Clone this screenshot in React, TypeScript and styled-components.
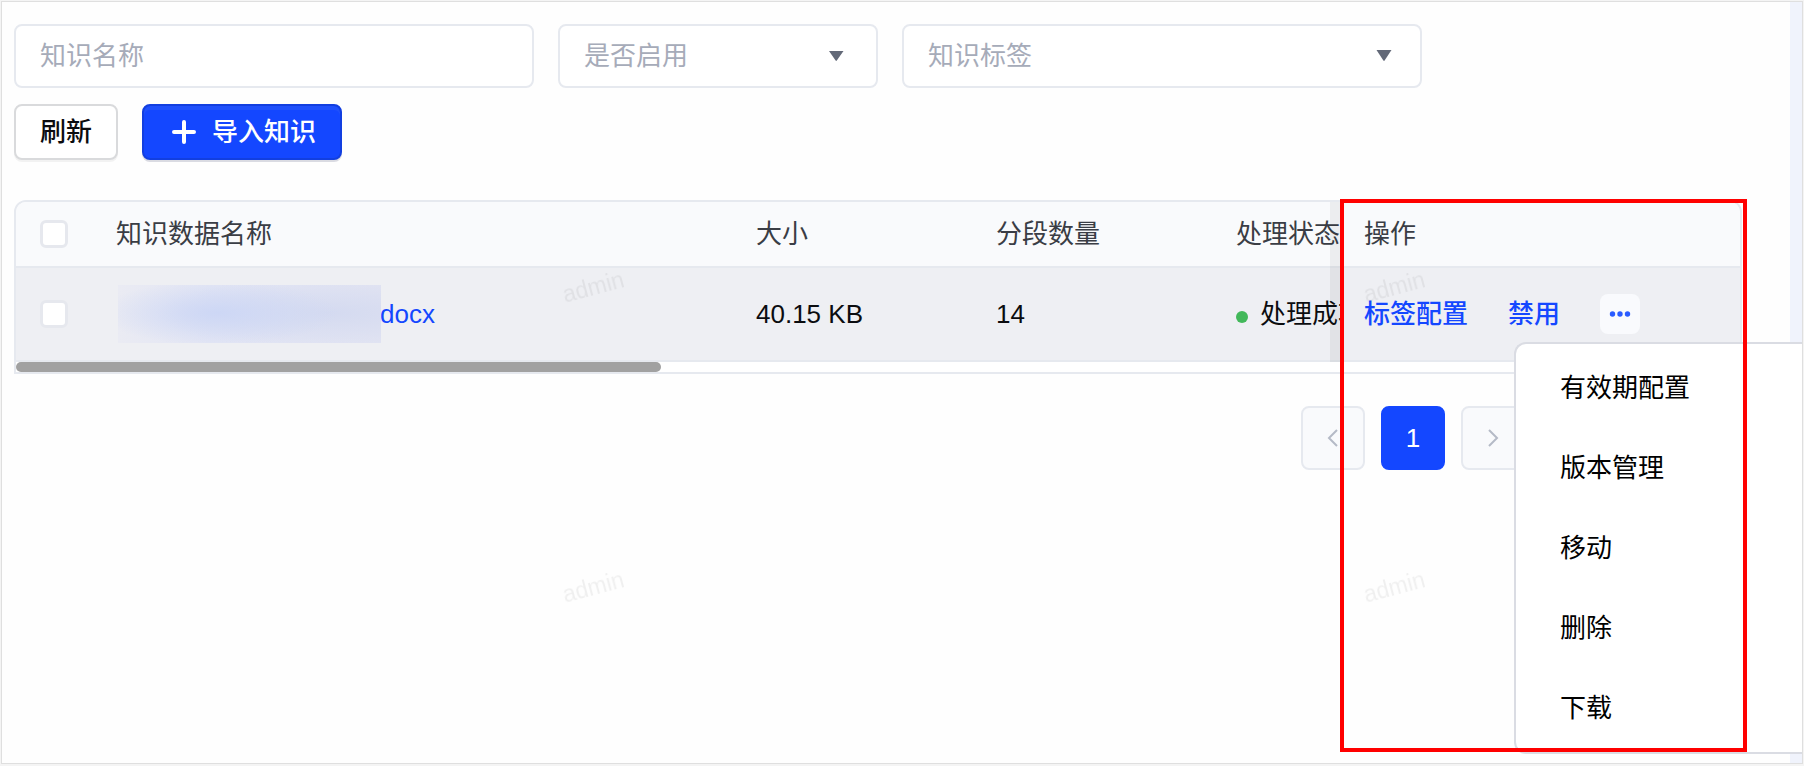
import React from "react";
import styled, { createGlobalStyle, css } from "styled-components";

const sans = `"Liberation Sans", "Noto Sans CJK SC", sans-serif`;
const blue = "#1447ff";
const line = "#e6e9ef";

const GlobalStyle = createGlobalStyle`
  *, *::before, *::after { box-sizing: border-box; }
  body { margin: 0; background: #fff; font-family: ${sans}; font-size: 26px; line-height: 36px; color: #0b0c0f; }
  button, input, select { font: inherit; color: inherit; margin: 0; }
`;

const Page = styled.div`
  display: flex;
  min-height: 100vh;
  padding: 1px 1px 2px;
  background: #f4f4f4;
`;

const Frame = styled.div`
  position: relative;
  display: flex;
  flex: 1;
  min-width: 0;
  overflow: hidden;
  border: 1px solid #dfdfdf;
  background: #fefefe;
`;

const Panel = styled.main`
  flex: 1;
  min-width: 0;
  padding: 22px 48px 0 12px;
`;

const Rail = styled.div`
  flex: none;
  width: 12px;
  background: #f0f3fc;
`;

const Filters = styled.form`
  display: flex;
  gap: 24px;
`;

const field = css`
  width: 100%;
  height: 64px;
  padding: 0 24px;
  border: 2px solid ${line};
  border-radius: 8px;
  background: #fff;
  color: #a6abb9;
  outline: none;
`;

const Field = styled.label<{ $width: number }>`
  position: relative;
  flex: 0 1 ${(p) => p.$width}px;
  min-width: 0;
`;

const TextInput = styled.input`
  ${field}
  &::placeholder { color: #a6abb9; opacity: 1; }
`;

const Select = styled.select`
  ${field}
  appearance: none;
`;

const Caret = styled.svg<{ $right: number }>`
  position: absolute;
  top: 26px;
  right: ${(p) => p.$right}px;
  width: 16px;
  height: 12px;
  fill: #636978;
  pointer-events: none;
`;

const Toolbar = styled.div`
  display: flex;
  gap: 24px;
  margin: 16px 0 40px;
`;

const Button = styled.button<{ $primary?: boolean }>`
  display: flex;
  align-items: center;
  gap: 16px;
  height: 56px;
  padding: 0 24px;
  border: 2px solid #d9dadc;
  border-radius: 8px;
  background: #fff;
  font-weight: 500;
  box-shadow: 0 2px 0 #f2f2f2;
  ${(p) =>
    p.$primary &&
    css`
      padding: 0 24px 0 28px;
      border-color: #123fe0;
      background: ${blue};
      color: #fff;
      box-shadow: 0 2px 0 #dadbe2, inset 0 4px 0 #1f50fb;
    `}
`;

const PlusIcon = styled.svg`
  width: 24px;
  height: 24px;
  stroke: #fff;
  stroke-width: 4;
  stroke-linecap: round;
`;

const TableArea = styled.section`
  position: relative;
`;

const TableFrame = styled.div`
  overflow: hidden;
  border: 2px solid ${line};
  border-radius: 12px 12px 0 0;
`;

const Table = styled.table`
  width: 1836px;
  min-width: 100%;
  table-layout: fixed;
  border-collapse: separate;
  border-spacing: 0;
  text-align: left;
`;

const Cell = styled.td<{ $pinned?: boolean }>`
  height: 94px;
  padding: 0 24px;
  border-bottom: 2px solid ${line};
  background: #eeeff3;
  white-space: nowrap;
  ${(p) =>
    p.$pinned &&
    css`
      position: sticky;
      right: 0;
      &::before {
        content: "";
        position: absolute;
        top: 0;
        bottom: -2px;
        left: -10px;
        width: 10px;
        background: rgba(0, 0, 0, 0.05);
      }
    `}
`;

const HeadCell = styled(Cell).attrs({ as: "th" })`
  height: 66px;
  background: #f9fafc;
  color: #3a3d45;
  font-weight: 400;
`;

const Checkbox = styled.input`
  display: block;
  appearance: none;
  width: 28px;
  height: 28px;
  border: 3px solid #e6e8ee;
  border-radius: 6px;
  background: #fff;
`;

const FileLink = styled.a`
  display: flex;
  align-items: center;
  color: ${blue};
  text-decoration: none;
`;

const Redacted = styled.span`
  position: relative;
  width: 263px;
  height: 58px;
  margin-left: 2px;
  margin-right: -1px;
  background:
    radial-gradient(ellipse 120px 32px at 100px 28px, #cdd7f5, transparent),
    radial-gradient(ellipse 170px 36px at 210px 28px, #d4daf0, transparent),
    linear-gradient(90deg, #eaebf3, #e2e5f4 35%, #e2e4f2);
`;

const Status = styled.span`
  display: flex;
  align-items: center;
  gap: 12px;
  &::before {
    content: "";
    width: 12px;
    height: 12px;
    margin-top: 6px;
    border-radius: 50%;
    background: #42b85a;
  }
`;

const Actions = styled.div`
  display: flex;
  align-items: center;
  gap: 40px;
`;

const ActionButton = styled.button`
  padding: 0;
  border: 0;
  background: none;
  color: ${blue};
  font-weight: 500;
`;

const MoreButton = styled(ActionButton)`
  width: 40px;
  height: 40px;
  border-radius: 8px;
  background: #f9fafd;
`;

const MoreIcon = styled.svg`
  display: block;
  width: 40px;
  height: 40px;
  fill: #2a5bff;
`;

const Track = styled.div`
  height: 10px;
  background: #fff;
`;

const Thumb = styled.div`
  width: 37.4%;
  height: 10px;
  border-radius: 5px;
  background: #a1a1a1;
`;

const Pagination = styled.nav`
  display: flex;
  justify-content: flex-end;
  gap: 16px;
  margin-top: 32px;
  padding-right: 217px;
`;

const PageButton = styled.button<{ $current?: boolean }>`
  display: flex;
  align-items: center;
  justify-content: center;
  width: 64px;
  height: 64px;
  padding: 0;
  border: 2px solid ${(p) => (p.$current ? blue : line)};
  border-radius: 8px;
  background: ${(p) => (p.$current ? blue : "#f9fafc")};
  color: ${(p) => (p.$current ? "#fff" : "#b5bac6")};
`;

const Chevron = styled.svg`
  width: 12px;
  height: 18px;
  fill: none;
  stroke: currentColor;
  stroke-width: 2;
`;

const Menu = styled.ul`
  position: absolute;
  top: 142px;
  right: -60px;
  width: 288px;
  margin: 0;
  padding: 4px 0;
  list-style: none;
  border: 2px solid #dadce3;
  border-right: 0;
  border-radius: 12px 0 0 12px;
  background: #fff;
`;

const MenuItem = styled.button`
  display: block;
  width: 100%;
  height: 80px;
  padding: 0 44px;
  border: 0;
  background: none;
  text-align: left;
  color: #000;
`;

const Highlight = styled.div`
  position: absolute;
  top: -1px;
  right: -5px;
  width: 407px;
  height: 553px;
  border: 4px solid #f00;
  pointer-events: none;
`;

const Watermarks = styled.div`
  position: absolute;
  top: 135px;
  left: 191px;
  display: grid;
  grid-template: repeat(2, 300px) / repeat(2, 801px);
  place-items: center;
  pointer-events: none;
`;

const Watermark = styled.span`
  font-size: 23px;
  color: rgba(0, 0, 0, 0.06);
  transform: rotate(-15deg);
`;

const columns = [76, 640, 240, 240, 240, 400];
const menuItems = ["有效期配置", "版本管理", "移动", "删除", "下载"];

export default function App() {
  return (
    <Page>
      <GlobalStyle />
      <Frame>
        <Panel>
          <Filters>
            <Field $width={520}>
              <TextInput aria-label="知识名称" placeholder="知识名称" />
            </Field>
            <Field $width={320}>
              <Select aria-label="是否启用">
                <option>是否启用</option>
              </Select>
              <Caret $right={34} viewBox="0 0 16 12">
                <path d="M1 1h14.500L8.800 10.500q-.6.900-1.200 0z" />
              </Caret>
            </Field>
            <Field $width={520}>
              <Select aria-label="知识标签">
                <option>知识标签</option>
              </Select>
              <Caret $right={30} viewBox="0 0 16 12">
                <path d="M.5 0h15L8.600 10.500q-.6.900-1.200 0z" />
              </Caret>
            </Field>
          </Filters>
          <Toolbar>
            <Button type="button">刷新</Button>
            <Button type="button" $primary>
              <PlusIcon viewBox="0 0 24 24">
                <path d="M12 2v20M2 12h20" />
              </PlusIcon>
              导入知识
            </Button>
          </Toolbar>
          <TableArea>
            <TableFrame>
              <Table>
                <colgroup>
                  {columns.map((width, i) => (
                    <col key={i} width={width} />
                  ))}
                </colgroup>
                <thead>
                  <tr>
                    <HeadCell>
                      <Checkbox type="checkbox" aria-label="全选" />
                    </HeadCell>
                    <HeadCell>知识数据名称</HeadCell>
                    <HeadCell>大小</HeadCell>
                    <HeadCell>分段数量</HeadCell>
                    <HeadCell>处理状态</HeadCell>
                    <HeadCell $pinned>操作</HeadCell>
                  </tr>
                </thead>
                <tbody>
                  <tr>
                    <Cell>
                      <Checkbox type="checkbox" aria-label="选择" />
                    </Cell>
                    <Cell>
                      <FileLink href="#">
                        <Redacted />
                        docx
                      </FileLink>
                    </Cell>
                    <Cell>40.15 KB</Cell>
                    <Cell>14</Cell>
                    <Cell>
                      <Status>处理成功</Status>
                    </Cell>
                    <Cell $pinned>
                      <Actions>
                        <ActionButton type="button">标签配置</ActionButton>
                        <ActionButton type="button">禁用</ActionButton>
                        <MoreButton type="button" aria-label="更多">
                          <MoreIcon viewBox="0 0 40 40">
                            <circle cx="12.500" cy="20" r="2.700" />
                            <circle cx="20" cy="20" r="2.700" />
                            <circle cx="27.500" cy="20" r="2.700" />
                          </MoreIcon>
                        </MoreButton>
                      </Actions>
                    </Cell>
                  </tr>
                </tbody>
              </Table>
              <Track>
                <Thumb />
              </Track>
            </TableFrame>
            <Pagination>
              <PageButton type="button" aria-label="上一页">
                <Chevron viewBox="0 0 12 18">
                  <path d="M10 1L2 9l8 8" />
                </Chevron>
              </PageButton>
              <PageButton type="button" $current>
                1
              </PageButton>
              <PageButton type="button" aria-label="下一页">
                <Chevron viewBox="0 0 12 18">
                  <path d="M2 1l8 8-8 8" />
                </Chevron>
              </PageButton>
            </Pagination>
            <Menu>
              {menuItems.map((item) => (
                <li key={item}>
                  <MenuItem type="button">{item}</MenuItem>
                </li>
              ))}
            </Menu>
            <Highlight />
          </TableArea>
        </Panel>
        <Rail />
        <Watermarks aria-hidden="true">
          {Array.from({ length: 4 }, (_, i) => (
            <Watermark key={i}>admin</Watermark>
          ))}
        </Watermarks>
      </Frame>
    </Page>
  );
}
